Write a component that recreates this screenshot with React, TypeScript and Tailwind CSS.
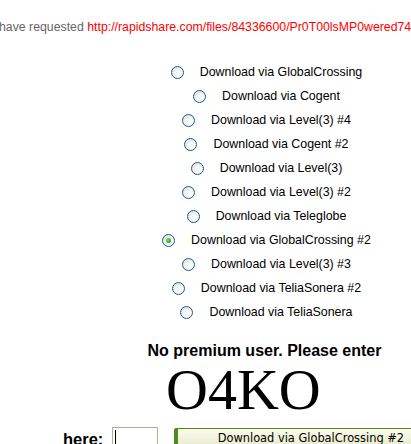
const mirrors = [
  'Download via GlobalCrossing',
  'Download via Cogent',
  'Download via Level(3) #4',
  'Download via Cogent #2',
  'Download via Level(3)',
  'Download via Level(3) #2',
  'Download via Teleglobe',
  'Download via GlobalCrossing #2',
  'Download via Level(3) #3',
  'Download via TeliaSonera #2',
  'Download via TeliaSonera',
];

function Radio({ checked }: { checked: boolean }) {
  return (
    <span className="flex h-[13px] w-[13px] shrink-0 items-center justify-center rounded-full border border-[#1c5a96] bg-[radial-gradient(circle_at_65%_70%,#ffffff_0%,#f4f4f0_45%,#d6d6cf_100%)]">
      {checked && (
        <span className="h-[5px] w-[5px] rounded-full bg-[radial-gradient(circle_at_40%_40%,#7ee07e_0%,#21a121_70%)]" />
      )}
    </span>
  );
}

export default function App() {
  const selected = 7;

  return (
    <div className="h-[444px] w-[411px] overflow-hidden bg-white font-['Liberation_Sans',Arial,sans-serif] text-black">
      <p className="ml-[-1px] mt-[20px] h-[14px] whitespace-nowrap text-[12.3px] leading-[14px] text-[#666]">
        have requested{' '}
        <a className="text-[#ff0000]">http://rapidshare.com/files/84336600/Pr0T00lsMP0wered74</a>
      </p>

      <div className="mt-[26px] w-[533px]">
        {mirrors.map((name, i) => (
          <label key={name} className="flex h-[24px] items-center justify-center gap-[16px] whitespace-nowrap text-[12.4px]">
            <Radio checked={i === selected} />
            <span>{name}</span>
          </label>
        ))}
      </div>

      <p className="mt-[17px] w-[529px] text-center text-[16px] font-bold leading-[20px]">
        No premium user. Please enter
      </p>

      <div className="h-[57px] pl-[166px] font-['Liberation_Serif','Times_New_Roman',serif] text-[58px] leading-[57px]">
        O4KO
      </div>

      <div className="mt-[9px] flex w-max items-start pl-[63px]">
        <span className="mt-[2px] shrink-0 text-[16.5px] font-bold leading-[20px]">here:</span>
        <span className="ml-[9px] flex h-[20px] w-[46px] shrink-0 items-center border border-[#a7b39a] bg-white pl-[2px]">
          <span className="h-[14px] w-px bg-black" />
        </span>
        <button
          type="button"
          className="ml-[16px] mt-px h-[20px] w-[270px] shrink-0 rounded-tl-[2px] border border-l-[4px] border-[#4f8a1e] bg-gradient-to-b from-[#fbfbea] to-[#e7ebcd] text-center font-['DejaVu_Sans',Verdana,sans-serif] text-[11.4px] leading-[17px] text-black"
        >
          Download via GlobalCrossing #2
        </button>
      </div>
    </div>
  );
}
